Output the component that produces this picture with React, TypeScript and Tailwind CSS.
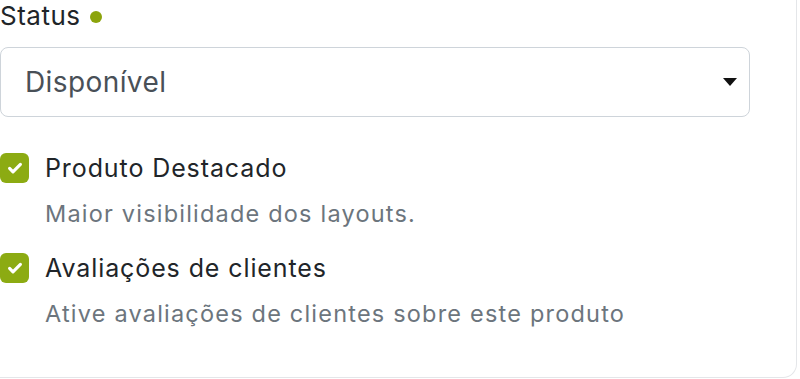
function CheckBox() {
  return (
    <span className="flex h-[30px] w-[29px] shrink-0 items-center justify-center rounded-[6px] bg-[#8cab12]">
      <svg width="18" height="18" viewBox="0 0 16 16" fill="none">
        <path d="M3.2 8.4l3 3L12.8 4.8" stroke="#fff" strokeWidth="2.8" strokeLinecap="round" strokeLinejoin="round" />
      </svg>
    </span>
  )
}

function Option({ title, hint }: { title: string; hint: string }) {
  return (
    <div className="flex flex-col">
      <div className="flex items-center gap-[16px]">
        <CheckBox />
        <span className="text-[25px] leading-[30px] tracking-[0.9px] text-[#212529]">{title}</span>
      </div>
      <p className="mt-[17px] pl-[45px] text-[23.5px] leading-[28px] tracking-[1.2px] text-[#6c757d]">{hint}</p>
    </div>
  )
}

export default function App() {
  return (
    <div className="h-[379px] w-[800px] overflow-hidden bg-white" style={{ fontFamily: 'Inter, "Noto Sans", sans-serif' }}>
      <div className="h-[378px] w-[797px] rounded-br-[14px] border-r border-b border-[#e4e6e9] pr-[46px]">
        <div className="flex h-[32px] items-center gap-[9px]">
          <span className="text-[26px] leading-[32px] tracking-[0.5px] text-[#212529]">Status</span>
          <span className="mt-[2px] h-[12px] w-[12px] rounded-full bg-[#8ca40c]" />
        </div>

        <div className="mt-[15px] flex h-[70px] w-[750px] items-center justify-between rounded-[8px] border border-[#ced4da] pl-[24px] pr-[12px]">
          <span className="text-[28px] leading-[34px] tracking-[0.4px] text-[#495057]">Disponível</span>
          <svg width="14" height="8" viewBox="0 0 14 8">
            <path d="M0 0h14L7 8z" fill="#111" />
          </svg>
        </div>

        <div className="mt-[36px] flex flex-col gap-[25px]">
          <Option title="Produto Destacado" hint="Maior visibilidade dos layouts." />
          <Option title="Avaliações de clientes" hint="Ative avaliações de clientes sobre este produto" />
        </div>
      </div>
    </div>
  )
}
